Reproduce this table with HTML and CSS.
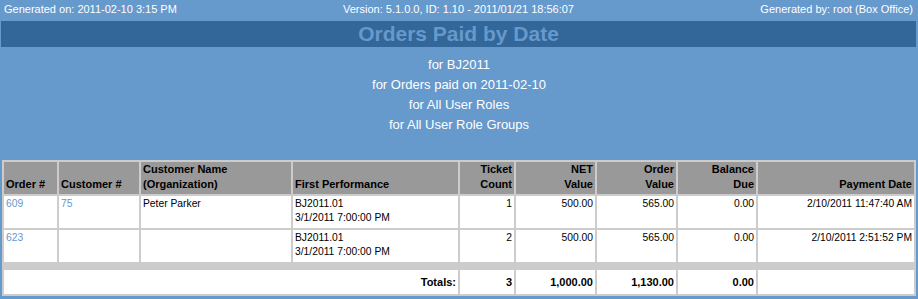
FILE: index.html
```html
<!DOCTYPE html>
<html>
<head>
<meta charset="utf-8">
<link rel="stylesheet" href="styles.css">
</head>
<body>
<div class="meta">
  <div class="meta-left">Generated on: 2011-02-10 3:15 PM</div>
  <div class="meta-center">Version: 5.1.0.0, ID: 1.10 - 2011/01/21 18:56:07</div>
  <div class="meta-right">Generated by: root (Box Office)</div>
</div>
<div class="title">Orders Paid by Date</div>
<div class="criteria">
  <div>for BJ2011</div>
  <div>for Orders paid on 2011-02-10</div>
  <div>for All User Roles</div>
  <div>for All User Role Groups</div>
</div>
<table class="report">
  <colgroup>
    <col class="c-order"><col class="c-cust"><col class="c-name"><col class="c-perf"><col class="c-tix"><col class="c-net"><col class="c-val"><col class="c-bal"><col class="c-date">
  </colgroup>
  <thead>
    <tr class="head">
      <th>Order #</th>
      <th>Customer #</th>
      <th>Customer Name<br>(Organization)</th>
      <th>First Performance</th>
      <th class="r">Ticket<br>Count</th>
      <th class="r">NET<br>Value</th>
      <th class="r">Order<br>Value</th>
      <th class="r">Balance<br>Due</th>
      <th class="r">Payment Date</th>
    </tr>
  </thead>
  <tbody>
    <tr class="row">
      <td><a href="#">609</a></td>
      <td><a href="#">75</a></td>
      <td>Peter Parker</td>
      <td>BJ2011.01<br>3/1/2011 7:00:00 PM</td>
      <td class="r">1</td>
      <td class="r">500.00</td>
      <td class="r">565.00</td>
      <td class="r">0.00</td>
      <td class="r">2/10/2011 11:47:40 AM</td>
    </tr>
    <tr class="row">
      <td><a href="#">623</a></td>
      <td></td>
      <td></td>
      <td>BJ2011.01<br>3/1/2011 7:00:00 PM</td>
      <td class="r">2</td>
      <td class="r">500.00</td>
      <td class="r">565.00</td>
      <td class="r">0.00</td>
      <td class="r">2/10/2011 2:51:52 PM</td>
    </tr>
    <tr class="spacer"><td colspan="9"></td></tr>
    <tr class="totals">
      <td colspan="4" class="r">Totals:</td>
      <td class="r">3</td>
      <td class="r">1,000.00</td>
      <td class="r">1,130.00</td>
      <td class="r">0.00</td>
      <td></td>
    </tr>
  </tbody>
</table>
</body>
</html>
```
FILE: styles.css
```css
* { box-sizing: border-box; }
html, body {
  margin: 0;
  padding: 0;
}
body {
  background: #6699cc;
  font-family: "Liberation Sans", Arial, sans-serif;
  color: #ffffff;
  width: 918px;
  height: 299px;
  overflow: hidden;
}
.meta {
  display: grid;
  grid-template-columns: 1fr auto 1fr;
  height: 21px;
  padding: 2px 5px 0 4px;
  font-size: 11px;
  line-height: 14px;
}
.meta-center { text-align: center; }
.meta-right { text-align: right; }
.title {
  margin: 0 2px 0 1px;
  height: 26px;
  line-height: 26px;
  background: #336699;
  color: #6699cc;
  font-weight: bold;
  font-size: 21px;
  text-align: center;
}
.criteria {
  padding-top: 8px;
  height: 113px;
  font-size: 13px;
  line-height: 20px;
  text-align: center;
}
.report {
  margin-left: 2px;
  width: 914px;
  table-layout: fixed;
  border-collapse: separate;
  border-spacing: 2px;
  background: #cccccc;
  color: #000000;
}
.c-order { width: 53px; }
.c-cust { width: 80px; }
.c-name { width: 150px; }
.c-perf { width: 165px; }
.c-tix { width: 54px; }
.c-net { width: 79px; }
.c-val { width: 79px; }
.c-bal { width: 78px; }
.c-date { width: 156px; }
.report th, .report td {
  padding: 0 2px;
  white-space: nowrap;
  overflow: hidden;
}
.head th {
  background: #999999;
  height: 32px;
  padding-bottom: 2px;
  vertical-align: bottom;
  text-align: left;
  font-size: 11px;
  line-height: 15px;
  font-weight: bold;
}
.report .r { text-align: right; }
.row td {
  background: #ffffff;
  height: 32px;
  padding-top: 1px;
  vertical-align: top;
  font-size: 10.3px;
  line-height: 14px;
}
.row a {
  color: #6699cc;
  text-decoration: none;
}
.spacer td {
  height: 4px;
  padding: 0;
  background: #cccccc;
}
.totals td {
  background: #ffffff;
  height: 24px;
  vertical-align: middle;
  font-size: 11px;
  font-weight: bold;
}
```
